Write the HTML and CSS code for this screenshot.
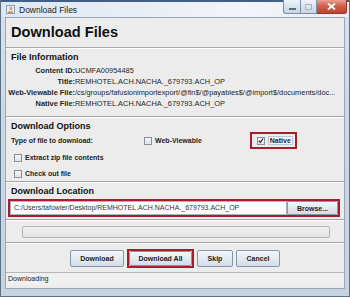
FILE: index.html
```html
<!DOCTYPE html>
<html>
<head>
<meta charset="utf-8">
<link rel="stylesheet" href="styles.css">
</head>
<body>
<div class="window">
  <div class="titlebar">
    <svg class="app-icon" width="9" height="9" viewBox="0 0 9 9">
      <rect x="0.5" y="0.5" width="8" height="8" fill="#e9eef5" stroke="#8f9db0"/>
      <path d="M2 6.5 L7 6.5 L6.5 8 L2.5 8 Z" fill="#d9782b"/>
      <path d="M4 1.5 C5 2.5 3.5 3.5 4.5 5" stroke="#d9782b" fill="none" stroke-width="0.9"/>
      <path d="M5.5 2 C6.3 3 5.2 3.8 5.8 5" stroke="#4a78b8" fill="none" stroke-width="0.8"/>
    </svg>
    <span class="title">Download Files</span>
    <div class="controls">
      <span class="ctl min"><span class="bar"></span></span>
      <span class="ctl max"><span class="sq"></span></span>
      <span class="ctl close">
        <svg width="9" height="7" viewBox="0 0 9 7"><path d="M1 0.5 L8 6.5 M8 0.5 L1 6.5" stroke="#fff" stroke-width="1.8"/></svg>
      </span>
    </div>
  </div>
  <div class="client">
    <div class="header"><h1 class="heading">Download Files</h1></div>
    <div class="section info">
      <div class="sec-title">File Information</div>
      <div class="rows">
        <span class="lbl">Content ID:</span><span class="val">UCMFA00954485</span>
        <span class="lbl">Title:</span><span class="val">REMHOTEL.ACH.NACHA._679793.ACH_OP</span>
        <span class="lbl">Web-Viewable File:</span><span class="val">/cs/groups/fafusionimportexport/@fin$/@payables$/@import$/documents/doc...</span>
        <span class="lbl">Native File:</span><span class="val">REMHOTEL.ACH.NACHA._679793.ACH_OP</span>
      </div>
    </div>
    <div class="section options">
      <div class="sec-title">Download Options</div>
      <div class="type-row">
        <span class="blabel type-label">Type of file to download:</span>
        <span class="check-item"><span class="cb"></span><span class="blabel">Web-Viewable</span></span>
        <span class="check-item native"><span class="cb checked"><svg width="7" height="7" viewBox="0 0 7 7"><path d="M1 3.8 L2.8 5.6 L6 1.2" stroke="#222" stroke-width="1.3" fill="none"/></svg></span><span class="blabel focus">Native</span></span>
      </div>
      <div class="check-item sub"><span class="cb"></span><span class="blabel">Extract zip file contents</span></div>
      <div class="check-item sub"><span class="cb"></span><span class="blabel">Check out file</span></div>
    </div>
    <div class="section location">
      <div class="sec-title">Download Location</div>
      <div class="path-box">
        <div class="path-field">C:/Users/tafowler/Desktop/REMHOTEL.ACH.NACHA._679793.ACH_OP</div>
        <button class="btn browse">Browse...</button>
      </div>
    </div>
    <div class="progress-panel"><div class="progress"></div></div>
    <div class="buttons">
      <button class="btn b-download">Download</button>
      <span class="hl"><button class="btn b-all">Download All</button></span>
      <button class="btn b-skip">Skip</button>
      <button class="btn b-cancel">Cancel</button>
    </div>
    <div class="status">Downloading</div>
  </div>
</div>
</body>
</html>
```
FILE: styles.css
```css
* { box-sizing: border-box; }
html, body { margin: 0; padding: 0; }
body {
  width: 350px;
  height: 297px;
  overflow: hidden;
  background: #c9d6e4;
  font-family: "Liberation Sans", Arial, sans-serif;
  color: #1e1e1e;
}
.window {
  width: 350px;
  height: 297px;
  border: 1px solid #5f6f82;
  border-top: none;
  background: linear-gradient(180deg, #d7e3f0 0%, #cbd8e7 40%, #c6d3e2 100%);
  padding: 0 4px 7px 4px;
  display: flex;
  flex-direction: column;
}
.titlebar {
  height: 17px;
  display: flex;
  align-items: center;
  position: relative;
  border-top: 2px solid #3f5f86;
  margin: 0 -4px;
  padding-left: 5px;
  background: linear-gradient(90deg, #dde7f2 0%, #e8eef5 40%, #f2f5f9 70%, #e9eef4 100%);
}
.app-icon { flex: none; }
.title {
  margin-left: 4px;
  font-size: 8.5px;
  color: #1b1b1b;
}
.controls {
  position: absolute;
  right: 2px;
  top: -2px;
  display: flex;
  height: 14px;
}
.ctl {
  display: flex;
  align-items: center;
  justify-content: center;
  height: 14px;
  border: 1px solid #7d8fa6;
  border-top: none;
  background: linear-gradient(180deg, #eef3f8 0%, #dbe4ee 50%, #c8d4e2 100%);
}
.ctl.min { width: 17px; border-radius: 0 0 0 3px; border-right: none; }
.ctl.max { width: 17px; }
.ctl.close {
  width: 30px;
  border-left: none;
  border-radius: 0 0 3px 0;
  border-color: #8a3b2e;
  background: linear-gradient(180deg, #e7a293 0%, #d4604a 45%, #c1402b 100%);
}
.ctl .bar { width: 7px; height: 2px; background: #fff; border: 1px solid #5b6d83; margin-top: 4px; }
.ctl .sq { width: 7px; height: 6px; border: 1px solid #a7b3c2; background: transparent; }

.client {
  flex: 1;
  background: #ececec;
  border: 1px solid #9aa6b5;
  display: flex;
  flex-direction: column;
}
.header {
  height: 30px;
  padding: 6px 0 0 5px;
  border-bottom: 1px solid #a9a9a9;
  box-shadow: 0 1px 0 #fff;
}
.heading {
  margin: 0;
  font-size: 14.6px;
  font-weight: bold;
  color: #111;
  line-height: 16px;
}
.section {
  border-bottom: 1px solid #a5a5a5;
  box-shadow: 0 1px 0 #fff;
  margin-top: 1px;
  padding: 3px 4px 0 5px;
}
.sec-title {
  font-size: 9px;
  font-weight: bold;
  line-height: 11px;
  color: #111;
}
.info { height: 68px; }
.rows {
  margin-top: 2px;
  margin-left: -3px;
  display: grid;
  grid-template-columns: 67px 1fr;
  font-size: 7.4px;
  line-height: 11px;
}
.lbl { font-weight: bold; text-align: right; white-space: nowrap; }
.val { white-space: nowrap; overflow: hidden; }

.options { height: 64px; padding-top: 3px; }
.blabel { font-size: 7px; font-weight: bold; white-space: nowrap; }
.type-row {
  display: flex;
  align-items: center;
  height: 17px;
}
.type-label { width: 133px; }
.check-item { display: flex; align-items: center; gap: 3px; }
.check-item.native {
  margin-left: 48px;
  border: 2px solid #a91d2b;
  padding: 2px 2px 2px 5px;
  height: 17px;
}
.check-item.sub { height: 15px; margin-left: 3px; margin-top: 1px; }
.cb {
  width: 8px;
  height: 8px;
  border: 1px solid #8a9099;
  background: linear-gradient(180deg, #f4f6f8 0%, #dfe5ec 100%);
  display: inline-flex;
  align-items: center;
  justify-content: center;
}
.focus { border: 1px solid #b8c6d8; padding: 0 1px; background: #f4f6f9; }

.location { height: 37px; padding-top: 3px; }
.path-box {
  margin: 2px 0 0 -3px;
  border: 2px solid #a91d2b;
  display: flex;
  height: 18px;
  width: 332px;
  align-items: stretch;
}
.path-field {
  width: 277px;
  background: #fff;
  border: 1px solid #a8b4c3;
  font-size: 7px;
  line-height: 12px;
  padding-left: 3px;
  color: #333;
  white-space: nowrap;
  overflow: hidden;
}
.btn {
  font-family: "Liberation Sans", Arial, sans-serif;
  font-size: 7px;
  font-weight: bold;
  color: #222;
  border: 1px solid #8797ab;
  border-radius: 2px;
  background: linear-gradient(180deg, #f3f6fa 0%, #e4eaf1 50%, #d3dce7 100%);
  padding: 0;
  margin: 0;
  height: 17px;
  white-space: nowrap;
}
.browse { flex: 1; height: auto; border-radius: 1px; }

.progress-panel {
  height: 22px;
  margin: 1px 0 0 0;
  padding: 5px 14px 0 16px;
  border-bottom: 1px solid #a5a5a5;
  box-shadow: 0 1px 0 #fff;
}
.progress {
  height: 12px;
  border: 1px solid #b0b7c0;
  border-radius: 2px;
  background: linear-gradient(180deg, #f0f0f0, #e3e3e3);
}
.buttons {
  height: 28px;
  display: flex;
  justify-content: center;
  align-items: center;
  gap: 3px;
  margin-top: 1px;
}
.b-download { width: 54px; }
.b-skip { width: 36px; }
.b-cancel { width: 44px; }
.hl { border: 2px solid #a91d2b; display: flex; }
.b-all { width: 63px; height: 15px; }
.status {
  height: 13px;
  font-size: 7px;
  line-height: 12px;
  padding-left: 2px;
  border-top: 1px solid #b5b5b5;
  color: #222;
  background: #f0f0f0;
}
```
